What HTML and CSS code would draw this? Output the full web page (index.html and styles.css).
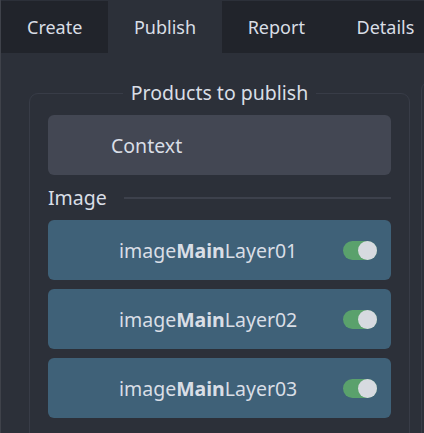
FILE: index.html
```html
<!DOCTYPE html>
<html>
<head>
<meta charset="utf-8">
<link rel="stylesheet" href="styles.css">
</head>
<body>
<div class="app">
  <nav class="tabs">
    <div class="tab">Create</div>
    <div class="tab active">Publish</div>
    <div class="tab">Report</div>
    <div class="tab">Details</div>
  </nav>
  <div class="content">
    <fieldset class="group">
      <legend class="group-title">Products to publish</legend>
      <div class="context">Context</div>
      <div class="section">
        <span class="section-label">Image</span>
        <span class="section-line"></span>
      </div>
      <div class="items">
        <div class="item">
          <span class="item-name">image<b>Main</b>Layer01</span>
          <span class="toggle"><span class="knob"></span></span>
        </div>
        <div class="item">
          <span class="item-name">image<b>Main</b>Layer02</span>
          <span class="toggle"><span class="knob"></span></span>
        </div>
        <div class="item">
          <span class="item-name">image<b>Main</b>Layer03</span>
          <span class="toggle"><span class="knob"></span></span>
        </div>
      </div>
    </fieldset>
    <fieldset class="group side"></fieldset>
  </div>
</div>
</body>
</html>
```

FILE: styles.css
```css
html, body {
  margin: 0;
  padding: 0;
  background: #2c3039;
  height: 100%;
  overflow: hidden;
}

.app {
  font-family: "Noto Sans", "Open Sans", sans-serif;
  color: #d9dee6;
  border-left: 1px solid #3f424a;
  height: 100%;
  box-sizing: border-box;
  display: flex;
  flex-direction: column;
  overflow: hidden;
}

.tabs {
  display: flex;
  padding-top: 1px;
  height: 53px;
  flex: 0 0 53px;
  box-sizing: border-box;
}

.tab {
  display: flex;
  align-items: center;
  padding: 0 25.6px 0 26px;
  font-size: 18px;
  background: #21242b;
}

.tab.active {
  background: #2c3039;
}

.tab:last-child {
  flex: 1;
}

.content {
  flex: 1;
  min-height: 0;
  display: flex;
  gap: 11px;
  padding-left: 28px;
  padding-top: 28px;
  overflow: hidden;
}

.group {
  flex: 0 0 381px;
  box-sizing: border-box;
  margin: 0 0 -40px;
  border: 1px solid #383c47;
  border-radius: 9px;
  padding: 10px 18px 20px;
  min-width: 0;
  min-height: 0;
}

.group.side {
  flex: 0 0 100px;
}

.group-title {
  margin: 0 auto;
  padding: 0 8px;
  font-size: 19.5px;
  line-height: 24px;
}

.context {
  height: 60px;
  background: #434753;
  border-radius: 6px;
  display: flex;
  align-items: center;
  padding-left: 63px;
  font-size: 19.5px;
}

.section {
  display: flex;
  align-items: center;
  gap: 17px;
  height: 45px;
  font-size: 19.5px;
}

.section-line {
  flex: 1;
  height: 2px;
  background: #3d414c;
}

.items {
  display: flex;
  flex-direction: column;
  gap: 9px;
}

.item {
  flex: 0 0 60px;
  height: 60px;
  background: #3f6178;
  border-radius: 6px;
  display: flex;
  align-items: center;
  padding-left: 71px;
  padding-right: 14px;
  font-size: 19.5px;
}

.item-name {
  flex: 1;
}

.item-name b {
  font-weight: 700;
}

.toggle {
  width: 34px;
  height: 19px;
  border-radius: 10px;
  background: #5aa16c;
  display: flex;
  justify-content: flex-end;
}

.knob {
  width: 19px;
  height: 19px;
  border-radius: 50%;
  background: #d7dae0;
}
```
